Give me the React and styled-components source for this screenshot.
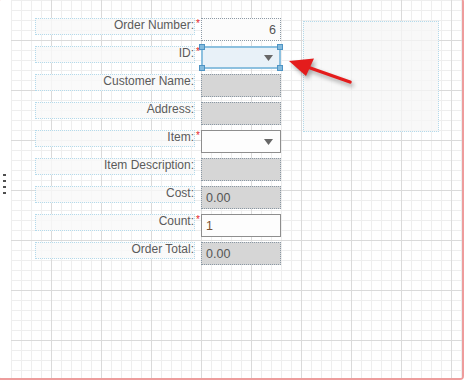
import React from "react";
import styled, { createGlobalStyle, css } from "styled-components";

const GlobalStyle = createGlobalStyle`
  html, body { margin: 0; padding: 0; background: #fff; overflow: hidden; }
  body { font-family: "Liberation Sans", Arial, sans-serif; }
`;

const Frame = styled.div`
  box-sizing: border-box;
  display: flex;
  width: 467px;
  height: 382px;
  margin: -2px 0 0 -3px;
  border: 2px solid #ee9c9c;
  border-radius: 4px;
  background: #fff;
  overflow: hidden;
`;

const Strip = styled.div`
  width: 12px;
  flex: none;
  display: flex;
  flex-direction: column;
  justify-content: center;
  gap: 4px;
  padding: 0 0 11px 4px;
  box-sizing: border-box;
`;

const Dot = styled.span`
  display: block;
  width: 3px;
  height: 2px;
  background: #4f4f4f;
`;

const Canvas = styled.div`
  position: relative;
  flex: 1;
  display: flex;
  align-items: flex-start;
  gap: 22px;
  padding: 18px 0 0 24px;
  background-color: #fff;
  background-image:
    linear-gradient(to right, #dadada 1px, transparent 1px),
    linear-gradient(to bottom, #dadada 1px, transparent 1px),
    linear-gradient(to right, #eeeeee 1px, transparent 1px),
    linear-gradient(to bottom, #eeeeee 1px, transparent 1px);
  background-size: 50px 50px, 50px 50px, 10px 10px, 10px 10px;
  background-position: 40px 0, 0 40px, 0 0, 0 0;
`;

const FormColumn = styled.div`
  display: flex;
  flex-direction: column;
  gap: 5px;
`;

const Row = styled.div`
  display: flex;
  align-items: flex-start;
  height: 23px;
`;

const LabelBox = styled.div`
  box-sizing: border-box;
  width: 160px;
  height: 17px;
  border: 1px dotted #b3daeb;
  background: rgba(249, 249, 249, 0.8);
  color: #5a5a5a;
  font-size: 12px;
  line-height: 13px;
  text-align: right;
  white-space: nowrap;
`;

const Req = styled.span`
  width: 6px;
  flex: none;
  color: #e61f1f;
  font-size: 10px;
  line-height: 12px;
  text-align: center;
`;

const variants = {
  text: css`
    background: #fbfbfb;
    border: 1px dotted #8c9aa6;
  `,
  readonly: css`
    background: #d6d6d6;
    border: 1px dotted #8a98a4;
  `,
  select: css`
    background: #fdfdfd;
    border: 1px solid #8e8e8e;
  `,
  selected: css`
    background: #e8f1f8;
    border: 2px solid #8cc0df;
  `,
};

const Field = styled.div`
  position: relative;
  box-sizing: border-box;
  width: 80px;
  height: 23px;
  display: flex;
  align-items: center;
  justify-content: ${(p) => (p.$align === "right" ? "flex-end" : "flex-start")};
  padding: 0 4px;
  font-size: 12.5px;
  color: ${(p) => p.$color || "#555"};
  ${(p) => variants[p.$kind]}
`;

const Caret = styled.svg`
  margin-left: auto;
  margin-right: ${(p) => (p.$selected ? "2px" : "3px")};
  display: block;
`;

const Handle = styled.span`
  position: absolute;
  width: 4px;
  height: 4px;
  background: #84bbdd;
  border: 1px solid #4f94c4;
  ${(p) => (p.$v === "top" ? "top: -4px;" : "bottom: -4px;")}
  ${(p) => (p.$h === "left" ? "left: -4px;" : "right: -4px;")}
`;

const SidePanel = styled.div`
  box-sizing: border-box;
  width: 136px;
  height: 111px;
  margin-top: 3px;
  border: 1px dotted #b3daeb;
  background: rgba(246, 246, 246, 0.75);
`;

const ArrowSvg = styled.svg`
  position: absolute;
  left: 259px;
  top: 45px;
  overflow: visible;
  filter: drop-shadow(2px 3px 2px rgba(0, 0, 0, 0.35));
`;

const fields = [
  { label: "Order Number:", req: true, kind: "text", value: "6", align: "right" },
  { label: "ID:", req: true, kind: "selected", caret: true },
  { label: "Customer Name:", kind: "readonly" },
  { label: "Address:", kind: "readonly" },
  { label: "Item:", req: true, kind: "select", caret: true },
  { label: "Item Description:", kind: "readonly" },
  { label: "Cost:", kind: "readonly", value: "0.00" },
  { label: "Count:", req: true, kind: "select", value: "1", color: "#7a5230" },
  { label: "Order Total:", kind: "readonly", value: "0.00" },
];

function DropCaret({ selected }) {
  return (
    <Caret $selected={selected} width="9" height="6" viewBox="0 0 9 6">
      <polygon points="0,0 9,0 4.5,6" fill="#676767" />
    </Caret>
  );
}

export default function App() {
  return (
    <>
      <GlobalStyle />
      <Frame>
        <Strip>
          <Dot />
          <Dot />
          <Dot />
          <Dot />
        </Strip>
        <Canvas>
          <FormColumn>
            {fields.map((f) => (
              <Row key={f.label}>
                <LabelBox>{f.label}</LabelBox>
                <Req>{f.req ? "*" : ""}</Req>
                <Field $kind={f.kind} $align={f.align} $color={f.color}>
                  {f.value}
                  {f.caret && <DropCaret selected={f.kind === "selected"} />}
                  {f.kind === "selected" && (
                    <>
                      <Handle $v="top" $h="left" />
                      <Handle $v="top" $h="right" />
                      <Handle $v="bottom" $h="left" />
                      <Handle $v="bottom" $h="right" />
                    </>
                  )}
                </Field>
              </Row>
            ))}
          </FormColumn>
          <SidePanel />
          <ArrowSvg width="100" height="50" viewBox="270 45 100 50">
            <line x1="350" y1="82" x2="306" y2="66.5" stroke="#e41c1c" strokeWidth="3.4" strokeLinecap="round" />
            <polygon points="289,61 314,58.5 306,76" fill="#e41c1c" />
          </ArrowSvg>
        </Canvas>
      </Frame>
    </>
  );
}
